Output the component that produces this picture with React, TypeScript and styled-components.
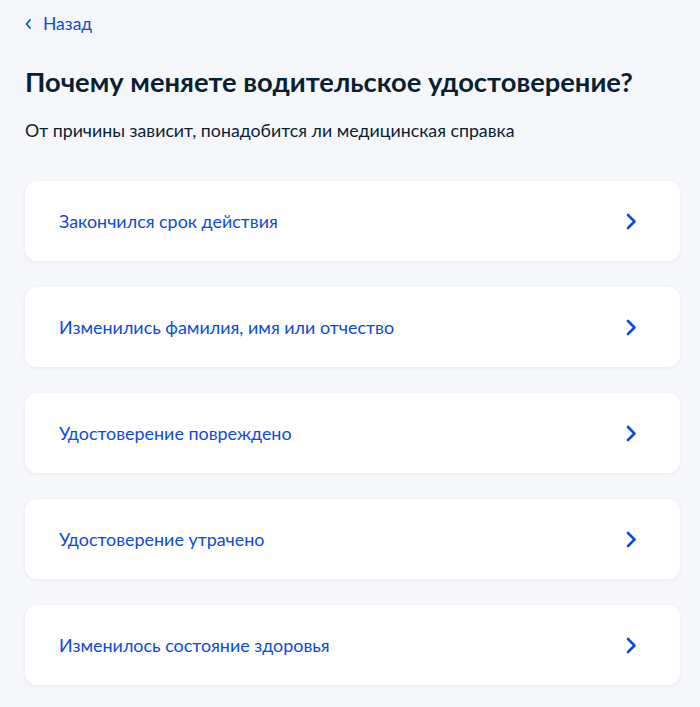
import styled, { createGlobalStyle } from 'styled-components';

const GlobalStyle = createGlobalStyle`
  html, body {
    margin: 0;
    padding: 0;
    background: #f5f7fa;
  }
  body {
    font-family: Lato, "Noto Sans", sans-serif;
    color: #0b1f33;
  }
`

const Page = styled.div`
  padding: 12px 20px 20px 25px;
`

const BackLink = styled.a`
  display: inline-flex;
  align-items: center;
  gap: 12px;
  color: #0d4cd3;
  font-size: 17.5px;
  line-height: 24px;
  text-decoration: none;
  cursor: pointer;
  svg {
    display: block;
  }
`

const Title = styled.h1`
  margin: 28px 0 0;
  font-size: 27.35px;
  line-height: 36px;
  font-weight: 700;
  color: #0b1f33;
`

const Subtitle = styled.p`
  margin: 17px 0 0;
  font-size: 17.75px;
  line-height: 27px;
  color: #0b1f33;
`

const ReasonList = styled.ul`
  list-style: none;
  margin: 37px 0 0;
  padding: 0;
  display: flex;
  flex-direction: column;
  gap: 26px;
`

const ReasonCard = styled.li`
  background: #ffffff;
  border-radius: 12px;
  box-shadow: 0 1px 4px rgba(11, 31, 51, 0.06);
  height: 80px;
  padding: 0 43px 0 34px;
  display: flex;
  align-items: center;
  justify-content: space-between;
  cursor: pointer;
`

const ReasonText = styled.span`
  color: #0d4cd3;
  font-size: 17.9px;
  line-height: 24px;
`

const reasons = [
  'Закончился срок действия',
  'Изменились фамилия, имя или отчество',
  'Удостоверение повреждено',
  'Удостоверение утрачено',
  'Изменилось состояние здоровья',
]

function App() {
  return (
    <>
      <GlobalStyle />
      <Page>
        <BackLink>
          <svg width="6" height="10" viewBox="0 0 6 10" fill="none">
            <path d="M5 1L1.5 5L5 9" stroke="#0d4cd3" strokeWidth="1.8" strokeLinecap="round" strokeLinejoin="round" />
          </svg>
          Назад
        </BackLink>
        <Title>Почему меняете водительское удостоверение?</Title>
        <Subtitle>От причины зависит, понадобится ли медицинская справка</Subtitle>
        <ReasonList>
          {reasons.map(r => (
            <ReasonCard key={r}>
              <ReasonText>{r}</ReasonText>
              <svg width="11" height="17" viewBox="0 0 11 17" fill="none">
                <path d="M2 2L8.5 8.5L2 15" stroke="#0d4cd3" strokeWidth="2.6" strokeLinecap="round" strokeLinejoin="round" />
              </svg>
            </ReasonCard>
          ))}
        </ReasonList>
      </Page>
    </>
  );
}

export default App;
